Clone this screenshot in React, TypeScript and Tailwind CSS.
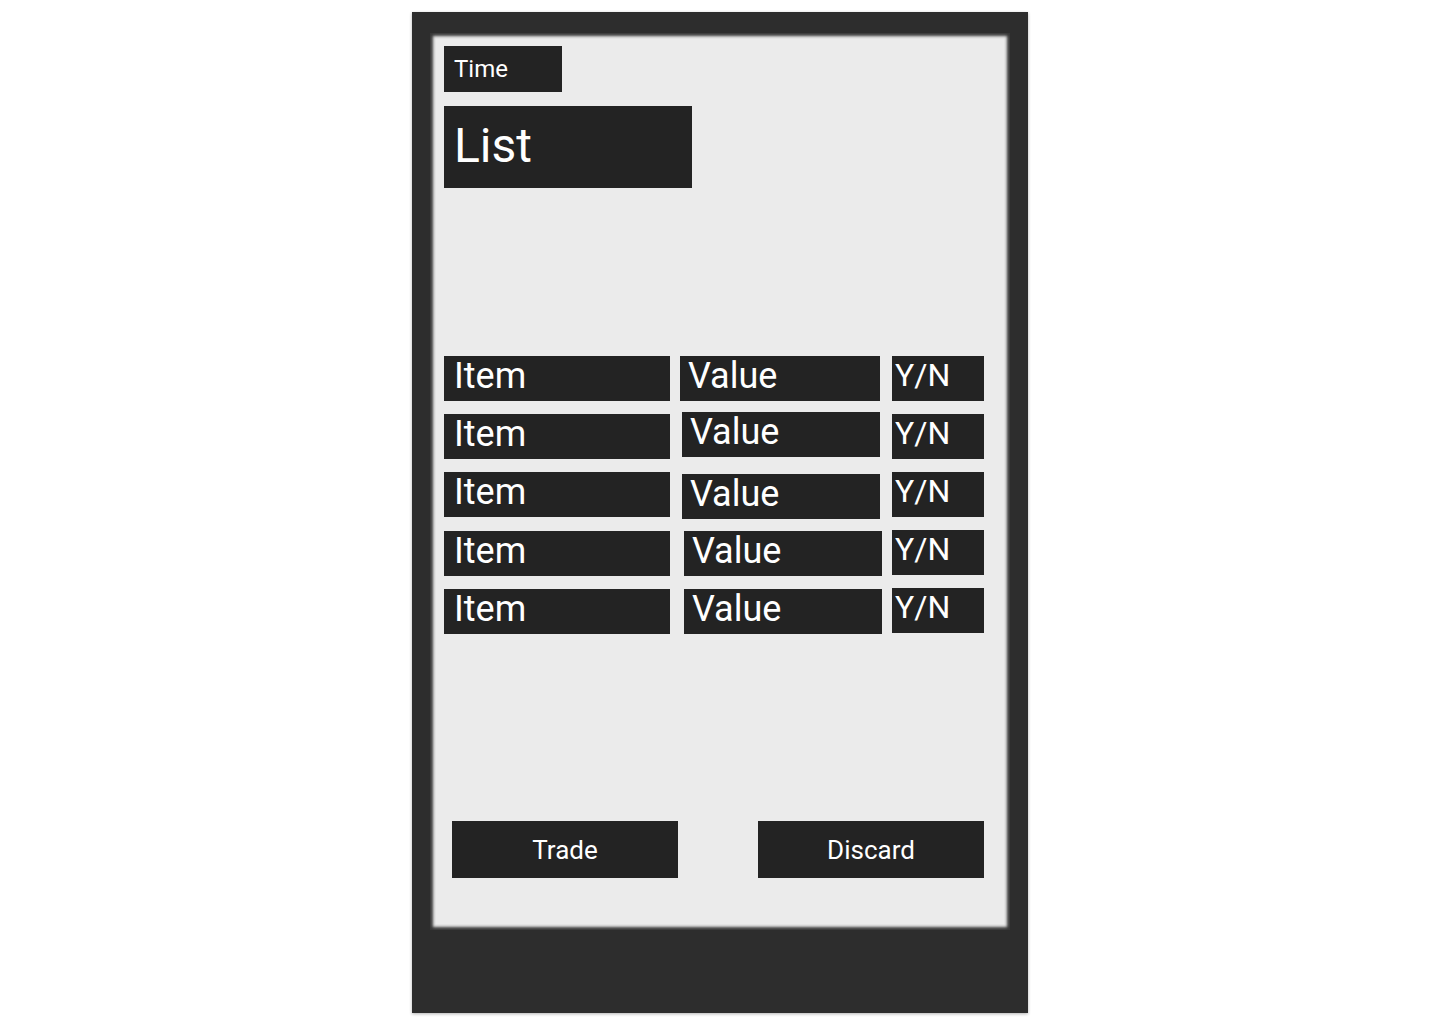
import React from "react";

const font = { fontFamily: "Roboto, 'Noto Sans', sans-serif" };

type RowSpec = { itemMt: string; valueMl: string; valueW: string; valueMt: string; ynMl: string };

const rows: RowSpec[] = [
  { itemMt: "mt-0", valueMl: "ml-[10px]", valueW: "w-[200px]", valueMt: "mt-0", ynMl: "ml-[12px]" },
  { itemMt: "mt-0", valueMl: "ml-[12px]", valueW: "w-[198px]", valueMt: "-mt-[2px]", ynMl: "ml-[12px]" },
  { itemMt: "mt-0", valueMl: "ml-[12px]", valueW: "w-[198px]", valueMt: "mt-[2px]", ynMl: "ml-[12px]" },
  { itemMt: "mt-[1px]", valueMl: "ml-[14px]", valueW: "w-[198px]", valueMt: "mt-[1px]", ynMl: "ml-[10px]" },
  { itemMt: "mt-[1px]", valueMl: "ml-[14px]", valueW: "w-[198px]", valueMt: "mt-[1px]", ynMl: "ml-[10px]" },
];

export default function App() {
  return (
    <div className="min-h-[1024px] w-[1440px] bg-white" style={font}>
      <div className="pt-[12px] pl-[412px]">
        <div className="w-[616px] h-[1001px] bg-[#2d2d2d] pt-[21px] pl-[18px] shadow-[0_1px_3px_rgba(0,0,0,0.3)]">
          <div className="w-[580px] h-[897px] bg-[#ebebeb] shadow-[inset_0_0_3px_3px_rgba(45,45,45,0.95)] pl-[14px] pt-[13px] flex flex-col">
            <div className="w-[118px] h-[46px] bg-[#232323] text-white text-[24px] leading-none flex items-center pl-[10px]">
              Time
            </div>
            <div className="mt-[14px] w-[248px] h-[82px] bg-[#232323] text-white text-[48px] leading-none flex items-center pl-[10px] pb-[2px]">
              List
            </div>

            <div className="mt-[168px] flex flex-col gap-[13px]">
              {rows.map((r, i) => (
                <div key={i} className="flex items-start h-[45px]">
                  <div className={`${r.itemMt} w-[226px] h-[45px] bg-[#232323] text-white text-[36px] leading-none pl-[10px] pt-[2px]`}>
                    Item
                  </div>
                  <div className={`${r.valueMl} ${r.valueW} ${r.valueMt} h-[45px] bg-[#232323] text-white text-[36px] leading-none pl-[8px] pt-[2px]`}>
                    Value
                  </div>
                  <div className={`${r.ynMl} w-[92px] h-[45px] bg-[#232323] text-white text-[32px] leading-none pl-[3px] pt-[3px]`}>
                    Y/N
                  </div>
                </div>
              ))}
            </div>

            <div className="mt-[188px] flex pl-[8px]">
              <div className="w-[226px] h-[57px] bg-[#232323] text-white text-[26px] leading-none flex items-center justify-center">
                Trade
              </div>
              <div className="ml-[80px] w-[226px] h-[57px] bg-[#232323] text-white text-[26px] leading-none flex items-center justify-center">
                Discard
              </div>
            </div>
          </div>
        </div>
      </div>
    </div>
  );
}
